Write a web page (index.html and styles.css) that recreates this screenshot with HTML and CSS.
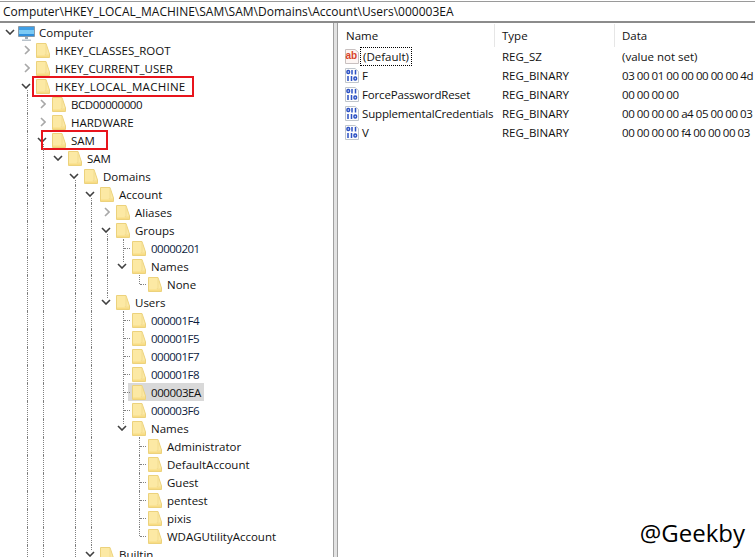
FILE: index.html
```html
<!DOCTYPE html>
<html lang="en">
<head>
<meta charset="utf-8">
<title>Registry Editor</title>
<link rel="stylesheet" href="styles.css">
</head>
<body>
<svg class="defs" aria-hidden="true">
  <symbol id="folder" viewBox="0 0 14 15">
    <path d="M.5.5h9.500l3.500 10.500v3.500H.5z" fill="#fce9a4" stroke="#ecd27c"/>
    <path d="M10 1v9.500l-1 1.500h4" fill="none" stroke="#f2dc90"/>
    <path d="M1 12.500h12v1.500H1z" fill="#f8dc84"/>
  </symbol>
  <symbol id="down" viewBox="0 0 10 6"><path d="M1 1l4 4 4-4" fill="none" stroke="#404040" stroke-width="1.600"/></symbol>
  <symbol id="right" viewBox="0 0 6 10"><path d="M1 1l4 4-4 4" fill="none" stroke="#a8a8a8" stroke-width="1.600"/></symbol>
  <symbol id="pc" viewBox="0 0 17 15">
    <path d="M.5.5h16v10H.5z" fill="#7ccaf4" stroke="#8a9aa8"/>
    <path d="M1 1h15v3H1z" fill="#3f9fe6"/>
    <path d="M1 8h15v2H1z" fill="#2f8fdc"/>
    <path d="M7 11h3v2H7z" fill="#9aa8b4"/>
    <path d="M4 13.500h9V15H4z" fill="#b8c2ca"/>
  </symbol>
  <symbol id="ab" viewBox="0 0 14 15">
    <path d="M.5.5h9.500l3.500 3v11H.5z" fill="#fdf6f4" stroke="#c8c0c0"/>
    <text class="abtext" x=".5" y="9.500">ab</text>
  </symbol>
  <symbol id="bin" viewBox="0 0 14 15">
    <path d="M.5.500h9.500l3.500 3v11H.5z" fill="#fdfdfd" stroke="#c0c6cc"/>
    <g fill="none" stroke="#2b50c4" stroke-width="1.500">
      <rect x="2" y="2.500" width="2.500" height="3" rx="1"/>
      <path d="M7 2v4.500M10.500 2v4.500M3 8v5M6.500 8v5"/>
      <rect x="9" y="9" width="2.500" height="3" rx="1"/>
    </g>
  </symbol>
</svg>

<div class="app">
  <div class="address">Computer\HKEY_LOCAL_MACHINE\SAM\SAM\Domains\Account\Users\000003EA</div>
  <div class="main">
    <div class="tree">
      <div class="row"><span class="c chev"><svg class="cd"><use href="#down"/></svg></span><span class="item"><svg class="pc"><use href="#pc"/></svg><span class="lb">Computer</span></span></div>
      <div class="row"><span class="c"></span><span class="c chev"><svg class="cr"><use href="#right"/></svg></span><span class="item"><svg class="fd"><use href="#folder"/></svg><span class="lb">HKEY_CLASSES_ROOT</span></span></div>
      <div class="row"><span class="c"></span><span class="c chev"><svg class="cr"><use href="#right"/></svg></span><span class="item"><svg class="fd"><use href="#folder"/></svg><span class="lb">HKEY_CURRENT_USER</span></span></div>
      <div class="row"><span class="c"></span><span class="c chev b"><svg class="cd"><use href="#down"/></svg></span><span class="item"><svg class="fd"><use href="#folder"/></svg><span class="lb wide">HKEY_LOCAL_MACHINE</span></span><span class="mark mark-hklm"></span></div>
      <div class="row"><span class="c"></span><span class="c v"></span><span class="c chev"><svg class="cr"><use href="#right"/></svg></span><span class="item"><svg class="fd"><use href="#folder"/></svg><span class="lb tight">BCD00000000</span></span></div>
      <div class="row"><span class="c"></span><span class="c v"></span><span class="c chev"><svg class="cr"><use href="#right"/></svg></span><span class="item"><svg class="fd"><use href="#folder"/></svg><span class="lb">HARDWARE</span></span></div>
      <div class="row"><span class="c"></span><span class="c v"></span><span class="c chev b"><svg class="cd"><use href="#down"/></svg></span><span class="item"><svg class="fd"><use href="#folder"/></svg><span class="lb">SAM</span></span><span class="mark mark-sam"></span></div>
      <div class="row"><span class="c"></span><span class="c v"></span><span class="c v"></span><span class="c chev"><svg class="cd"><use href="#down"/></svg></span><span class="item"><svg class="fd"><use href="#folder"/></svg><span class="lb">SAM</span></span></div>
      <div class="row"><span class="c"></span><span class="c v"></span><span class="c v"></span><span class="c"></span><span class="c chev b"><svg class="cd"><use href="#down"/></svg></span><span class="item"><svg class="fd"><use href="#folder"/></svg><span class="lb">Domains</span></span></div>
      <div class="row"><span class="c"></span><span class="c v"></span><span class="c v"></span><span class="c"></span><span class="c v"></span><span class="c chev b"><svg class="cd"><use href="#down"/></svg></span><span class="item"><svg class="fd"><use href="#folder"/></svg><span class="lb">Account</span></span></div>
      <div class="row"><span class="c"></span><span class="c v"></span><span class="c v"></span><span class="c"></span><span class="c v"></span><span class="c v"></span><span class="c chev"><svg class="cr"><use href="#right"/></svg></span><span class="item"><svg class="fd"><use href="#folder"/></svg><span class="lb">Aliases</span></span></div>
      <div class="row"><span class="c"></span><span class="c v"></span><span class="c v"></span><span class="c"></span><span class="c v"></span><span class="c v"></span><span class="c chev b"><svg class="cd"><use href="#down"/></svg></span><span class="item"><svg class="fd"><use href="#folder"/></svg><span class="lb">Groups</span></span></div>
      <div class="row"><span class="c"></span><span class="c v"></span><span class="c v"></span><span class="c"></span><span class="c v"></span><span class="c v"></span><span class="c v"></span><span class="c t"></span><span class="item"><svg class="fd"><use href="#folder"/></svg><span class="lb num">00000201</span></span></div>
      <div class="row"><span class="c"></span><span class="c v"></span><span class="c v"></span><span class="c"></span><span class="c v"></span><span class="c v"></span><span class="c v"></span><span class="c chev a"><svg class="cd"><use href="#down"/></svg></span><span class="item"><svg class="fd"><use href="#folder"/></svg><span class="lb">Names</span></span></div>
      <div class="row"><span class="c"></span><span class="c v"></span><span class="c v"></span><span class="c"></span><span class="c v"></span><span class="c v"></span><span class="c v"></span><span class="c"></span><span class="c l"></span><span class="item"><svg class="fd"><use href="#folder"/></svg><span class="lb">None</span></span></div>
      <div class="row"><span class="c"></span><span class="c v"></span><span class="c v"></span><span class="c"></span><span class="c v"></span><span class="c v"></span><span class="c chev a"><svg class="cd"><use href="#down"/></svg></span><span class="item"><svg class="fd"><use href="#folder"/></svg><span class="lb">Users</span></span></div>
      <div class="row"><span class="c"></span><span class="c v"></span><span class="c v"></span><span class="c"></span><span class="c v"></span><span class="c v"></span><span class="c"></span><span class="c t"></span><span class="item"><svg class="fd"><use href="#folder"/></svg><span class="lb num">000001F4</span></span></div>
      <div class="row"><span class="c"></span><span class="c v"></span><span class="c v"></span><span class="c"></span><span class="c v"></span><span class="c v"></span><span class="c"></span><span class="c t"></span><span class="item"><svg class="fd"><use href="#folder"/></svg><span class="lb num">000001F5</span></span></div>
      <div class="row"><span class="c"></span><span class="c v"></span><span class="c v"></span><span class="c"></span><span class="c v"></span><span class="c v"></span><span class="c"></span><span class="c t"></span><span class="item"><svg class="fd"><use href="#folder"/></svg><span class="lb num">000001F7</span></span></div>
      <div class="row"><span class="c"></span><span class="c v"></span><span class="c v"></span><span class="c"></span><span class="c v"></span><span class="c v"></span><span class="c"></span><span class="c t"></span><span class="item"><svg class="fd"><use href="#folder"/></svg><span class="lb num">000001F8</span></span></div>
      <div class="row"><span class="c"></span><span class="c v"></span><span class="c v"></span><span class="c"></span><span class="c v"></span><span class="c v"></span><span class="c"></span><span class="c t"></span><span class="item sel"><svg class="fd"><use href="#folder"/></svg><span class="lb tight">000003EA</span></span></div>
      <div class="row"><span class="c"></span><span class="c v"></span><span class="c v"></span><span class="c"></span><span class="c v"></span><span class="c v"></span><span class="c"></span><span class="c t"></span><span class="item"><svg class="fd"><use href="#folder"/></svg><span class="lb num">000003F6</span></span></div>
      <div class="row"><span class="c"></span><span class="c v"></span><span class="c v"></span><span class="c"></span><span class="c v"></span><span class="c v"></span><span class="c"></span><span class="c chev a"><svg class="cd"><use href="#down"/></svg></span><span class="item"><svg class="fd"><use href="#folder"/></svg><span class="lb">Names</span></span></div>
      <div class="row"><span class="c"></span><span class="c v"></span><span class="c v"></span><span class="c"></span><span class="c v"></span><span class="c v"></span><span class="c"></span><span class="c"></span><span class="c t"></span><span class="item"><svg class="fd"><use href="#folder"/></svg><span class="lb">Administrator</span></span></div>
      <div class="row"><span class="c"></span><span class="c v"></span><span class="c v"></span><span class="c"></span><span class="c v"></span><span class="c v"></span><span class="c"></span><span class="c"></span><span class="c t"></span><span class="item"><svg class="fd"><use href="#folder"/></svg><span class="lb">DefaultAccount</span></span></div>
      <div class="row"><span class="c"></span><span class="c v"></span><span class="c v"></span><span class="c"></span><span class="c v"></span><span class="c v"></span><span class="c"></span><span class="c"></span><span class="c t"></span><span class="item"><svg class="fd"><use href="#folder"/></svg><span class="lb">Guest</span></span></div>
      <div class="row"><span class="c"></span><span class="c v"></span><span class="c v"></span><span class="c"></span><span class="c v"></span><span class="c v"></span><span class="c"></span><span class="c"></span><span class="c t"></span><span class="item"><svg class="fd"><use href="#folder"/></svg><span class="lb">pentest</span></span></div>
      <div class="row"><span class="c"></span><span class="c v"></span><span class="c v"></span><span class="c"></span><span class="c v"></span><span class="c v"></span><span class="c"></span><span class="c"></span><span class="c t"></span><span class="item"><svg class="fd"><use href="#folder"/></svg><span class="lb">pixis</span></span></div>
      <div class="row"><span class="c"></span><span class="c v"></span><span class="c v"></span><span class="c"></span><span class="c v"></span><span class="c v"></span><span class="c"></span><span class="c"></span><span class="c l"></span><span class="item"><svg class="fd"><use href="#folder"/></svg><span class="lb">WDAGUtilityAccount</span></span></div>
      <div class="row"><span class="c"></span><span class="c v"></span><span class="c v"></span><span class="c"></span><span class="c v"></span><span class="c chev a"><svg class="cd"><use href="#down"/></svg></span><span class="item"><svg class="fd"><use href="#folder"/></svg><span class="lb">Builtin</span></span></div>
    </div>
    <div class="splitter"></div>
    <div class="list">
      <div class="head">
        <span class="col-name hcell">Name</span>
        <span class="col-type hcell">Type</span>
        <span class="col-data hcell">Data</span>
      </div>
      <div class="val"><span class="col-name"><svg class="ic"><use href="#ab"/></svg><span class="focus">(Default)</span></span><span class="col-type">REG_SZ</span><span class="col-data">(value not set)</span></div>
      <div class="val"><span class="col-name"><svg class="ic"><use href="#bin"/></svg><span>F</span></span><span class="col-type">REG_BINARY</span><span class="col-data hex">03 00 01 00 00 00 00 00 4d</span></div>
      <div class="val"><span class="col-name"><svg class="ic"><use href="#bin"/></svg><span class="snug">ForcePasswordReset</span></span><span class="col-type">REG_BINARY</span><span class="col-data hex">00 00 00 00</span></div>
      <div class="val"><span class="col-name"><svg class="ic"><use href="#bin"/></svg><span class="snug">SupplementalCredentials</span></span><span class="col-type">REG_BINARY</span><span class="col-data hex">00 00 00 00 a4 05 00 00 03</span></div>
      <div class="val"><span class="col-name"><svg class="ic"><use href="#bin"/></svg><span>V</span></span><span class="col-type">REG_BINARY</span><span class="col-data hex">00 00 00 00 f4 00 00 00 03</span></div>
    </div>
  </div>
  <div class="watermark">@Geekby</div>
</div>
</body>
</html>
```
FILE: styles.css
```css
* { box-sizing: border-box; }
html, body { margin: 0; padding: 0; background: #fff; }
body {
  width: 755px;
  height: 557px;
  overflow: hidden;
  font-family: "Open Sans", "Liberation Sans", sans-serif;
  font-size: 11.5px;
  color: #111;
}
.defs { display: none; }
.abtext { font: bold 10px "Liberation Sans", sans-serif; fill: #d8432a; }

.app { position: relative; width: 755px; height: 557px; display: flex; flex-direction: column; overflow: hidden; }

.address {
  height: 22px;
  flex: none;
  margin-top: 1px;
  padding-left: 3px;
  font-size: 12px;
  line-height: 19px;
  border-top: 1px solid #9a9a9a;
  border-bottom: 2px solid #8c8c8c;
  white-space: nowrap;
}

.main { flex: 1; display: flex; min-height: 0; }

.tree { position: relative; width: 333px; flex: none; padding-left: 2px; overflow: hidden; }
.row { height: 18px; display: flex; align-items: stretch; white-space: nowrap; position: relative; }

.c { width: 16px; flex: none; position: relative; }
.c.v::before, .c.t::before, .c.l::before, .c.b::before, .c.a::before {
  content: "";
  position: absolute;
  left: 9px;
  border-left: 1px dotted #808080;
}
.c.v::before, .c.t::before { top: 0; bottom: 0; }
.c.l::before { top: 0; height: 9px; }
.c.b::before { top: 13px; bottom: 0; }
.c.a::before { top: 0; height: 5px; }
.c.t::after, .c.l::after {
  content: "";
  position: absolute;
  left: 10px;
  top: 9px;
  width: 6px;
  border-top: 1px dotted #808080;
}
.chev { display: flex; align-items: center; }
.cd { width: 10px; height: 6px; margin-left: 3px; }
.cr { width: 6px; height: 10px; margin-left: 6px; }

.item { display: flex; align-items: center; padding-right: 3px; }
.item.sel { background: #d9d9d9; margin-left: -2px; padding-left: 2px; }
.fd { width: 14px; height: 15px; margin-left: 2px; flex: none; align-self: flex-start; margin-top: 2px; }
.pc { width: 17px; height: 15px; flex: none; margin-top: 2px; }
.lb { line-height: 18px; padding-top: 2px; }
.fd + .lb { margin-left: 5px; }
.pc + .lb { margin-left: 4px; }
.num { color: #0c1c40; letter-spacing: -.5px; }
.tight { letter-spacing: -.4px; }
.wide { letter-spacing: .28px; }

.mark { position: absolute; border: 2px solid #e8141c; pointer-events: none; }
.mark-hklm { left: 30px; top: -1px; width: 162px; height: 21px; }
.mark-sam { left: 39px; top: -1px; width: 67px; height: 20px; }

.splitter {
  width: 5px;
  flex: none;
  background: #e2e2e2;
  border-left: 1px solid #a0a0a0;
  border-right: 1px solid #a0a0a0;
}

.list { flex: 1; min-width: 0; overflow: hidden; }
.head { height: 24px; display: flex; }
.val { height: 19px; display: flex; align-items: center; white-space: nowrap; }
.col-name { width: 157px; flex: none; display: flex; align-items: center; padding-left: 7px; }
.col-type { width: 120px; flex: none; padding-left: 7px; }
.col-data { flex: 1; padding-left: 7px; white-space: nowrap; }
.hex { letter-spacing: -.45px; }
.snug { letter-spacing: -.16px; }
.head .col-name { padding-left: 8px; }
.hcell { display: flex; align-items: center; border-right: 1px solid #e6e6e6; height: 23px; margin-top: 1px; }
.head .col-data { border-right: 0; }
.ic { width: 14px; height: 15px; flex: none; margin-right: 3px; }
.focus { outline: 1px dotted #000; margin-left: -1px; padding: 0 2px; height: 17px; line-height: 17px; }

.watermark {
  position: absolute;
  right: 10px;
  bottom: 9px;
  font-size: 24px;
  font-weight: 500;
  line-height: 30px;
  color: #000;
  text-shadow: 0 0 2px #fff;
}
```
